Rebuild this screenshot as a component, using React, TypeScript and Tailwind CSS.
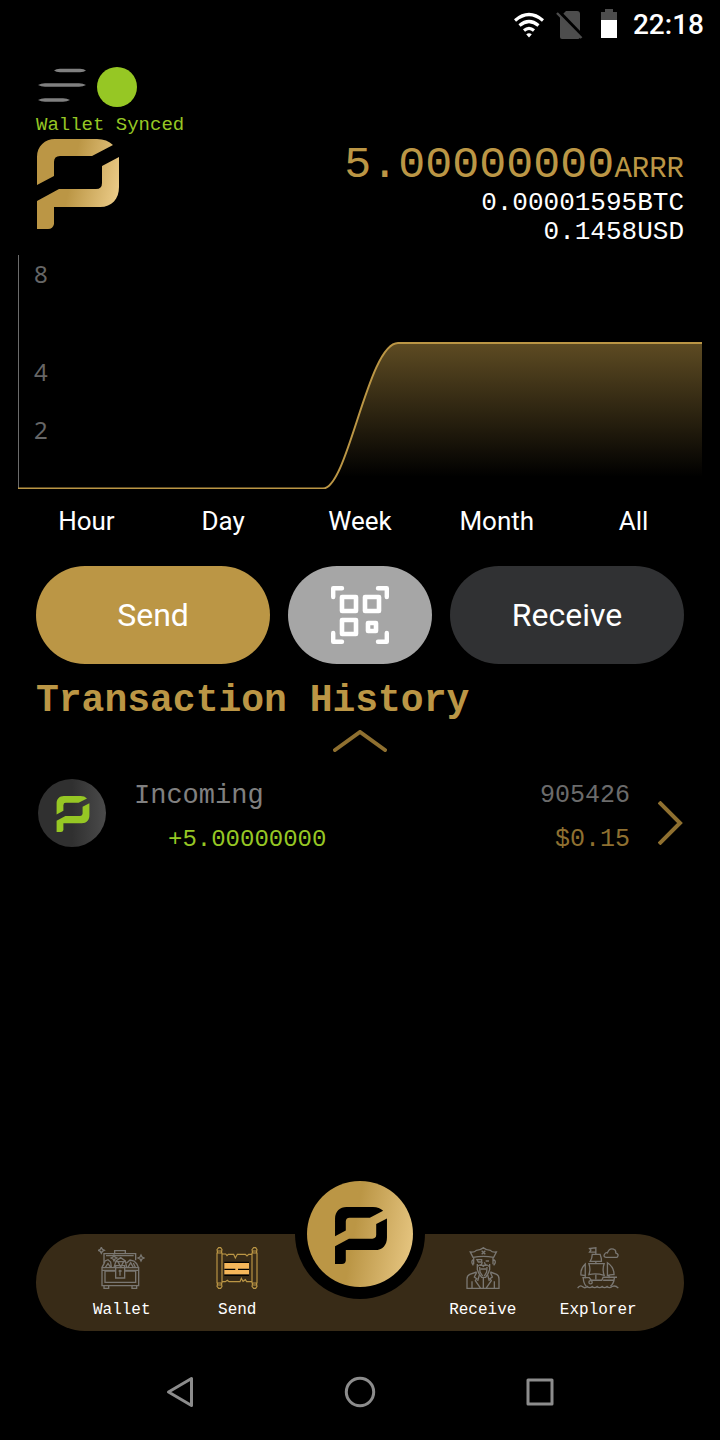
import type { ReactNode } from "react";

const periods = ["Hour", "Day", "Week", "Month", "All"];

const transactions = [
  { id: "905426", label: "Incoming", amount: "+5.00000000", height: "905426", fiat: "$0.15" },
];

function PirateMark({ className, fill }: { className: string; fill: string }) {
  return (
    <svg viewBox="0 0 82 90" className={className} fill={fill} aria-hidden="true">
      <defs>
        <linearGradient id="mark-gold" gradientUnits="userSpaceOnUse" x1="0" y1="30" x2="82" y2="48">
          <stop offset="0.42" stopColor="#bb9645" />
          <stop offset="1" stopColor="#eaca86" />
        </linearGradient>
      </defs>
      <path d="M0 46V18C0 7 8 0 18 0H60Q70 0 76 6L55 17H23Q17 17 17 23V37Z" />
      <path d="M0 62L22 50H59Q65 50 65 44V27L82 18V48C82 60 75 68 63 68H17V85Q16 90 11 90H0Z" />
    </svg>
  );
}

function StatusBar() {
  return (
    <div className="flex h-[50px] items-center justify-end pr-4 text-white">
      <svg viewBox="0 0 30 26" className="h-[26px] w-[30px]" fill="none" stroke="white" strokeWidth="3.2" aria-hidden="true">
        <path d="M1 8.500Q15-3.500 29 8.500" />
        <path d="M5.500 13.500Q15 5.500 24.500 13.500" />
        <path d="M10 18.500Q15 14.300 20 18.500" />
        <path d="M12.200 22.300Q15 20 17.800 22.300L15 25.500Z" fill="white" stroke="none" />
      </svg>
      <svg viewBox="0 0 27 28" className="ml-3 h-7 w-[27px]" aria-hidden="true">
        <path d="M10 0H21Q24 0 24 3V26Q24 28 21 28H6Q4 28 4 26V6Z" fill="#4d4d4d" />
        <path d="M2 0L27 26" stroke="black" strokeWidth="4" />
        <path d="M1 2L25.500 27" stroke="#4d4d4d" strokeWidth="2.400" />
      </svg>
      <svg viewBox="0 0 16 32" className="mr-4 ml-[18px] h-8 w-4" aria-hidden="true">
        <path d="M4 0H12V3H16V12H0V3H4Z" fill="#4d4d4d" />
        <path d="M0 11H16V29H0Z" fill="white" />
      </svg>
      <time className="font-['Roboto',sans-serif] text-[28px] font-medium">22:18</time>
    </div>
  );
}

function BalanceChart() {
  return (
    <svg viewBox="0 0 684 234" className="h-auto w-full" role="img" aria-label="Balance">
      <defs>
        <linearGradient id="area" gradientUnits="userSpaceOnUse" x1="0" y1="88" x2="0" y2="222">
          <stop offset="0" stopColor="#bb9645" stopOpacity="0.5" />
          <stop offset="1" stopColor="#bb9645" stopOpacity="0" />
        </linearGradient>
      </defs>
      <path d="M305 233.500C330 233.500 350 88 380 88H684V233.500Z" fill="url(#area)" />
      <path d="M0.500 0V234" stroke="#6b6b6b" />
      <path d="M0 233.500H305C330 233.500 350 88 380 88H684" fill="none" stroke="#bb9645" strokeWidth="2" />
      <g fill="#666" className="font-['Noto_Sans',sans-serif] text-[24px]">
        <text x="16" y="28">8</text>
        <text x="16" y="126">4</text>
        <text x="16" y="184">2</text>
      </g>
    </svg>
  );
}

function QrIcon() {
  return (
    <svg viewBox="0 0 58 58" className="h-[58px] w-[58px]" fill="none" stroke="white" strokeLinecap="round" strokeLinejoin="round" aria-hidden="true">
      <path strokeWidth="4.400" d="M2.200 11V2.200H11M47 2.200H55.800V11M55.800 47V55.800H47M11 55.800H2.200V47" />
      <path strokeWidth="4.600" d="M11 11H25V25H11ZM34 11H48V25H34ZM11 34H25V48H11Z" />
      <path strokeWidth="4.600" d="M37 37H45V45H37Z" />
    </svg>
  );
}

function ChestIcon() {
  return (
    <svg viewBox="0 0 141 126" className="h-[42px] w-[47px]" fill="none" stroke="#7a7772" strokeWidth="4" aria-hidden="true">
      <path d="M10 1L13 7L19 10L13 13L10 19L7 13L1 10L7 7ZM129 24L132 30L138 33L132 36L129 42L126 36L120 33L126 30ZM48 24L51 30L57 33L51 36L48 42L45 36L39 33L45 30Z" />
      <path d="M18 48V20H113V40M50 20V11H82V20M24 26H107" />
      <path d="M12 61L18 50L21 42L30 38L38 45L40 61M22 61L30 49L38 61M48 61L54 42L68 32L82 42L86 61M54 44H82M60 44L68 60L77 44M86 48L96 39L108 42L116 50L121 61M90 61L98 47L106 61M106 48L112 61" />
      <path d="M12 62H122V116H12ZM21 72H53M80 72H113V106H21V72M12 70H53M80 70H122" />
      <path d="M53 56H80V93H53ZM62 72H71M66 68V86" />
      <path d="M18 116V124H32V116M102 116V124H116V116" />
    </svg>
  );
}

function ScrollIcon() {
  return (
    <svg viewBox="0 0 126 126" className="h-[42px] w-[42px]" fill="none" stroke="#bb9645" strokeWidth="3.500" aria-hidden="true">
      <path d="M3 18H18V108H3ZM108 18H123V108H108Z" />
      <path d="M2 12H19M2 114H19M107 12H124M107 114H124M5 18L3 8L8 2H14L18 8L16 18M110 18L108 8L113 2H119L123 8L121 18M5 108L3 118L8 124H14L18 118L16 108M110 108L108 118L113 124H119L123 118L121 108" />
      <path d="M18 21H29L33 26L37 22H53L58 33L64 22H88L93 27L98 22H108M18 104H28L34 100L39 104H72L76 94L81 103L88 98L92 104H108" />
      <path d="M25 48H99V82H25Z" fill="#f6b75a" stroke="none" />
      <path d="M25 46H99M25 67H58M66 67H99M25 85H99" stroke="black" strokeWidth="4" />
    </svg>
  );
}

function PirateIcon() {
  return (
    <svg viewBox="0 0 100 126" className="h-[42px] w-[34px]" fill="none" stroke="#7a7772" strokeWidth="4" aria-hidden="true">
      <path d="M20 31L12 15Q24 17 30 10Q42 10 51 2Q60 10 72 10Q78 17 90 15L82 31Q51 25 20 31ZM46 11L57 22M57 11L46 22" />
      <path d="M22 32V52M80 32V52M21 38Q12 44 21 55M82 38Q92 44 82 55M32 38H46V45H36ZM58 42H68" />
      <path d="M48 46L44 55H58L54 46M33 51V68L38 80L46 91H58L65 80L70 68V51M34 58Q42 49 51 58Q60 49 68 58M40 60L41 75L49 87M62 60L61 75L54 87M43 66H59" />
      <path d="M31 75L10 82Q2 86 2 96V124H98V96Q98 86 91 82L72 75M31 76L24 90L31 95L27 101L43 124M72 76L78 90L71 95L75 101L59 124M39 84L34 102M64 84L69 102M51 91V124M17 103V124M84 103V124" />
    </svg>
  );
}

function ShipIcon() {
  return (
    <svg viewBox="0 0 127 126" className="h-[42px] w-[42px]" fill="none" stroke="#7a7772" strokeWidth="4" aria-hidden="true">
      <path d="M57 22V2L38 4L42 9L38 15H57M46 22H70Q75 34 74 43H40Q46 34 46 22ZM57 43V50" />
      <path d="M88 31Q78 29 84 20Q87 15 92 17Q98 2 110 6Q119 9 117 17Q129 22 121 31Z" />
      <path d="M36 50H82Q76 67 82 85Q58 78 36 83Q42 67 36 50ZM57 82V98M92 86V47Q112 60 112 83Q101 82 92 86ZM25 51Q10 65 12 84L25 86ZM97 86V94M25 86V94" />
      <path d="M16 92H37L43 100H75L79 91H121M19 93Q20 110 28 118M113 92Q112 110 101 118M79 100H110" />
      <circle cx="41" cy="106" r="5" />
      <path d="M2 124Q9 113 17 120Q24 126 31 119Q38 126 46 119Q53 126 61 119Q68 126 76 119Q83 126 91 119Q98 126 106 119Q116 114 125 124" />
    </svg>
  );
}

function NavItem({ label, children }: { label: string; children: ReactNode }) {
  return (
    <a href="#" className="flex flex-1 flex-col items-center gap-[9px] pt-[13px] text-[16px] leading-6 text-white">
      {children}
      {label}
    </a>
  );
}

export default function App() {
  return (
    <div className="flex min-h-screen flex-col bg-black font-['Liberation_Mono',monospace]">
      <StatusBar />

      <header className="mt-[17px] flex items-start justify-between px-9">
        <div>
          <div className="flex items-center gap-2.5">
            <button type="button" aria-label="Menu">
              <svg viewBox="0 0 51 38" className="h-[38px] w-[51px]" fill="#808080">
                <path d="M18 2.500Q20 0.800 24 0.800H44Q48 0.800 50 2.500Q48 4.200 44 4.200H24Q20 4.200 18 2.500ZM2 17Q5 15.300 9 15.300H43Q47 15.300 50 17Q47 18.700 43 18.700H9Q5 18.700 2 17ZM2 32Q5 30.300 9 30.300H27Q31 30.300 34 32Q31 33.700 27 33.700H9Q5 33.700 2 32Z" />
              </svg>
            </button>
            <span className="h-10 w-10 rounded-full bg-[#96c724]" />
          </div>
          <p className="mt-1 text-[19px] leading-7 text-[#96c724]">Wallet Synced</p>
          <PirateMark className="ml-px h-[90px] w-[82px]" fill="url(#mark-gold)" />
        </div>
        <div className="pt-[76px] text-right text-[26px] leading-[29px] text-white">
          <p className="text-[45px] leading-[46px] text-[#bb9645]">
            5.00000000<span className="text-[29px] leading-none">ARRR</span>
          </p>
          <p>0.00001595BTC</p>
          <p>0.1458USD</p>
        </div>
      </header>

      <section className="mt-2 px-[18px] font-['Roboto',sans-serif]">
        <BalanceChart />
        <div className="flex h-16 text-[26px] text-white">
          {periods.map((period) => (
            <button key={period} type="button" className="flex-1">
              {period}
            </button>
          ))}
        </div>
      </section>

      <div className="mt-[13px] flex h-[98px] gap-[18px] px-9 font-['Roboto',sans-serif] text-[32px] text-white">
        <button type="button" className="flex-1 rounded-full bg-[#bb9645]">Send</button>
        <button type="button" aria-label="Scan QR code" className="flex w-36 items-center justify-center rounded-full bg-[#a6a6a6]">
          <QrIcon />
        </button>
        <button type="button" className="flex-1 rounded-full bg-[#303133]">Receive</button>
      </div>

      <main className="flex flex-1 flex-col px-9">
        <h1 className="mt-3.5 text-[38px] leading-[46px] font-bold text-[#bb9645]">Transaction History</h1>
        <button type="button" aria-label="Expand history" className="mt-1.5 self-center">
          <svg viewBox="0 0 54 22" className="h-[22px] w-[54px]" fill="none" stroke="#8f7030" strokeWidth="4" strokeLinecap="round">
            <path d="M2 20L27 2L52 20" />
          </svg>
        </button>
        <ul className="mt-[21px]">
          {transactions.map((tx) => (
            <li key={tx.id}>
              <a href="#" className="flex items-start leading-[44px]">
                <span className="mt-1.5 ml-0.5 flex h-[68px] w-[68px] items-center justify-center rounded-full bg-linear-to-r from-[#303030] from-50% to-[#4b4b4b] pt-0.5 pl-0.5">
                  <PirateMark className="h-9 w-[34px]" fill="#96c724" />
                </span>
                <div className="ml-7 flex-1 pt-px">
                  <p className="text-[27px] text-[#808080]">{tx.label}</p>
                  <p className="pl-[34px] text-[24px] text-[#96c724]">{tx.amount}</p>
                </div>
                <div className="pt-px text-right text-[25px]">
                  <p className="text-[#6b6b6b]">{tx.height}</p>
                  <p className="text-[#8f7030]">{tx.fiat}</p>
                </div>
                <svg viewBox="0 0 26 44" className="mt-7 ml-7 h-11 w-[26px]" fill="none" stroke="#8f7030" strokeWidth="4" aria-hidden="true">
                  <path d="M1 1L22 22L1 43" />
                </svg>
              </a>
            </li>
          ))}
        </ul>
      </main>

      <nav className="relative mx-9 flex h-[97px] rounded-full bg-[#382b17] px-7">
        <NavItem label="Wallet"><ChestIcon /></NavItem>
        <NavItem label="Send"><ScrollIcon /></NavItem>
        <div className="w-[130px]" />
        <NavItem label="Receive"><PirateIcon /></NavItem>
        <NavItem label="Explorer"><ShipIcon /></NavItem>
        <button
          type="button"
          aria-label="Home"
          className="absolute -top-[65px] left-1/2 flex h-[130px] w-[130px] -translate-x-1/2 items-center justify-center rounded-full bg-black"
        >
          <span className="flex h-[106px] w-[106px] items-center justify-center rounded-full bg-linear-100 from-[#bb9645] from-45% to-[#eaca86] pt-0.5 pl-0.5">
            <PirateMark className="h-[57px] w-[52px]" fill="black" />
          </span>
        </button>
      </nav>

      <div className="mt-[13px] grid h-24 grid-cols-3 px-[90px]">
        <button type="button" aria-label="Back" className="flex items-center justify-center">
          <svg viewBox="0 0 32 32" className="h-8 w-8" fill="none" stroke="#8c8c8c" strokeWidth="3" strokeLinejoin="round">
            <path d="M4.500 16L27.500 2.500V29.500Z" />
          </svg>
        </button>
        <button type="button" aria-label="Home screen" className="flex items-center justify-center">
          <svg viewBox="0 0 32 32" className="h-8 w-8" fill="none" stroke="#8c8c8c" strokeWidth="3">
            <circle cx="16" cy="16" r="13.700" />
          </svg>
        </button>
        <button type="button" aria-label="Recent apps" className="flex items-center justify-center">
          <svg viewBox="0 0 32 32" className="h-8 w-8" fill="none" stroke="#8c8c8c" strokeWidth="3" strokeLinejoin="round">
            <path d="M4 4H28V28H4Z" />
          </svg>
        </button>
      </div>
    </div>
  );
}
